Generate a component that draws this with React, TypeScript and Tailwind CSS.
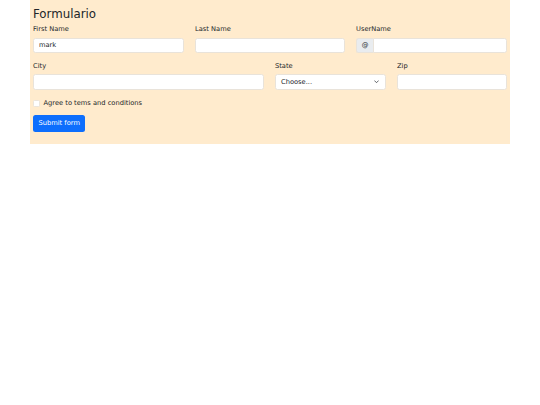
export default function App() {
  const font = { fontFamily: '"DejaVu Sans", sans-serif' };
  const input =
    "block h-[15.5px] w-full rounded-[2.5px] border border-[#e9e3da] bg-white px-[5px] text-[6.7px] text-[#212529] outline-none";
  const label = "mb-[3.5px] block text-[6.7px] leading-[10px] text-[#212529]";

  return (
    <div className="min-h-screen bg-white" style={font}>
      <div className="ml-[30px] w-[480px] bg-[#ffebcd] px-[3px] pt-[6.5px] pb-[12.5px]">
        <h3 className="mb-[3.5px] text-[11.8px] leading-[14px] font-normal text-[#212529]">Formulario</h3>

        <div className="grid grid-cols-[151px_150px_151px] gap-x-[11px]">
          <div>
            <label className={label}>First Name</label>
            <input className={input} defaultValue="mark" />
          </div>
          <div>
            <label className={label}>Last Name</label>
            <input className={input} />
          </div>
          <div>
            <label className={label}>UserName</label>
            <div className="flex h-[15.5px]">
              <span className="flex w-[17px] items-center justify-center rounded-l-[2.5px] border border-r-0 border-[#e9e3da] bg-[#e9ecef] text-[6.7px] text-[#212529]">
                @
              </span>
              <input className="block h-[15.5px] min-w-0 flex-1 rounded-r-[2.5px] border border-[#e9e3da] bg-white px-[5px] text-[6.7px] outline-none" />
            </div>
          </div>
        </div>

        <div className="mt-[7.5px] grid grid-cols-[231px_111px_110px] gap-x-[11px]">
          <div>
            <label className={label}>City</label>
            <input className={input} />
          </div>
          <div>
            <label className={label}>State</label>
            <div className="flex h-[15.5px] items-center justify-between rounded-[2.5px] border border-[#e9e3da] bg-white pr-[6px] pl-[5px] text-[6.7px] text-[#212529]">
              <span>Choose...</span>
              <svg width="5" height="3.5" viewBox="0 0 16 10" fill="none" stroke="#343a40" strokeWidth="2.5" strokeLinecap="round" strokeLinejoin="round">
                <path d="M2 2l6 6 6-6" />
              </svg>
            </div>
          </div>
          <div>
            <label className={label}>Zip</label>
            <input className={input} />
          </div>
        </div>

        <div className="mt-[8.5px] flex items-center gap-[3.5px] text-[6.7px] leading-[10px] text-[#212529]">
          <span className="h-[7px] w-[7px] rounded-[1.5px] border border-[#ebe5dc] bg-white" />
          <span>Agree to tems and conditions</span>
        </div>

        <button className="mt-[7px] block h-[16.5px] rounded-[2.5px] bg-[#0d6efd] px-[5.5px] text-[6.7px] leading-[10px] text-white">
          Submit form
        </button>
      </div>
    </div>
  );
}
